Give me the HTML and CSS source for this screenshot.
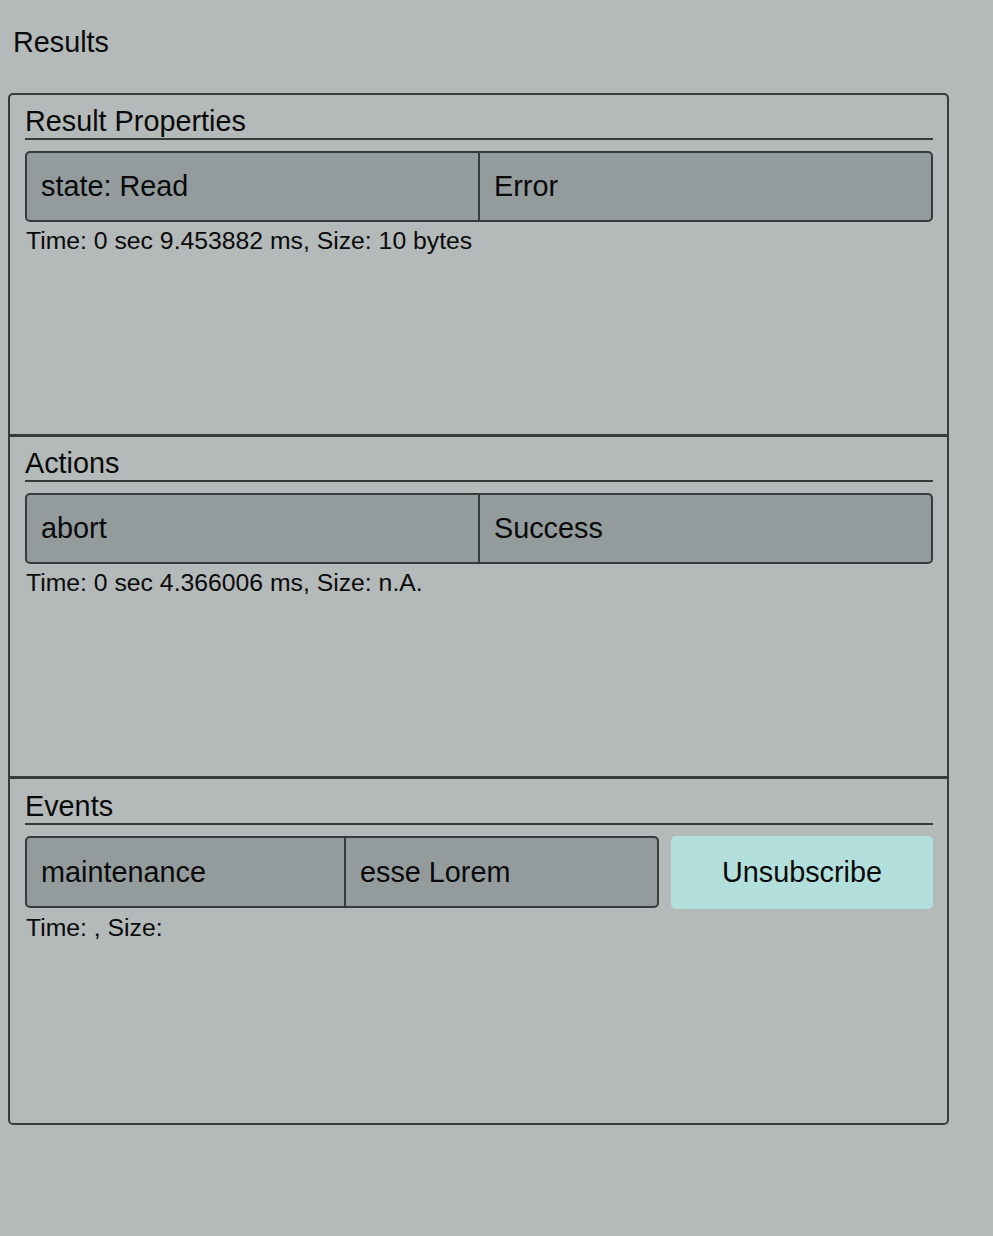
FILE: index.html
```html
<!DOCTYPE html>
<html>
<head>
<meta charset="utf-8">
<link rel="stylesheet" href="styles.css">
</head>
<body>
<div class="page">
  <div class="title">Results</div>
  <div class="panel">
    <section class="sec sec-first">
      <div class="sec-head">Result Properties</div>
      <div class="row">
        <div class="field">
          <div class="cell">state: Read</div>
          <div class="cell">Error</div>
        </div>
      </div>
      <div class="meta">Time: 0 sec 9.453882 ms, Size: 10 bytes</div>
    </section>
    <section class="sec">
      <div class="sec-head">Actions</div>
      <div class="row">
        <div class="field">
          <div class="cell">abort</div>
          <div class="cell">Success</div>
        </div>
      </div>
      <div class="meta">Time: 0 sec 4.366006 ms, Size: n.A.</div>
    </section>
    <section class="sec sec-last">
      <div class="sec-head">Events</div>
      <div class="row">
        <div class="field field-tall">
          <div class="cell cell-wide">maintenance</div>
          <div class="cell">esse Lorem</div>
        </div>
        <button class="btn">Unsubscribe</button>
      </div>
      <div class="meta">Time: , Size:</div>
    </section>
  </div>
</div>
</body>
</html>
```
FILE: styles.css
```css
html, body {
  margin: 0;
  padding: 0;
  background: #b4b9b9;
}
body {
  font-family: "Liberation Sans", Arial, sans-serif;
  color: #0a0a0a;
  width: 993px;
  height: 1236px;
  overflow: hidden;
}
.page {
  padding: 26px 0 0 8px;
}
.title {
  font-size: 28.8px;
  line-height: 33px;
  padding-left: 5px;
  margin-bottom: 34px;
}
.panel {
  width: 937px;
  border: 2px solid #383b3b;
  border-radius: 5px;
}
.sec {
  height: 339px;
  padding: 0 14px 0 15px;
  box-sizing: border-box;
}
.sec + .sec {
  border-top: 3px solid #383b3b;
  height: 342px;
}
.sec-last.sec {
  height: 347px;
}
.sec-head {
  font-size: 28.8px;
  line-height: 33px;
  padding: 10px 0 0 0;
  border-bottom: 2px solid #383b3b;
}
.sec-last .sec-head {
  padding-top: 11px;
}
.row {
  display: flex;
  gap: 12px;
  margin-top: 11px;
}
.field {
  flex: 1;
  display: flex;
  height: 71px;
  box-sizing: border-box;
  border: 2px solid #383b3b;
  border-radius: 5px;
  background: #939b9c;
  overflow: hidden;
}
.field-tall {
  height: 72px;
}
.cell {
  flex: 1;
  display: flex;
  align-items: center;
  padding-left: 14px;
  font-size: 28.8px;
}
.cell + .cell {
  border-left: 2px solid #383b3b;
}
.cell-wide {
  flex: 1.02;
}
.btn {
  width: 262px;
  height: 73px;
  border: none;
  border-radius: 5px;
  background: #b2dfdc;
  font-family: "Liberation Sans", Arial, sans-serif;
  font-size: 28.8px;
  color: #0a0a0a;
  padding: 0;
}
.meta {
  font-size: 24.75px;
  line-height: 28px;
  margin-top: 5px;
  padding-left: 1px;
}
```
